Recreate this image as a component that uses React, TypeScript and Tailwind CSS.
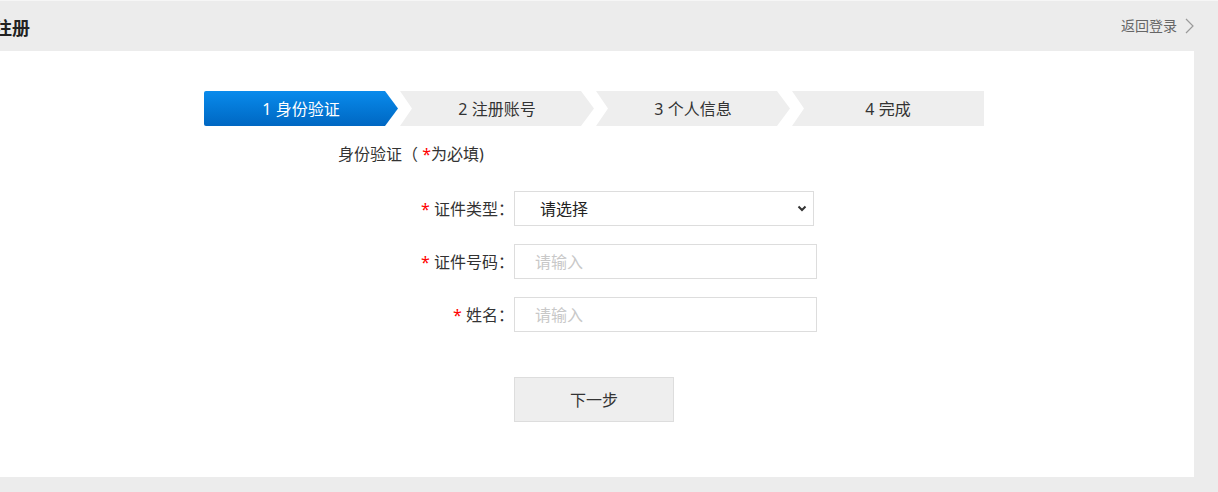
import React from 'react';

const steps = [
  { label: '1 身份验证', shape: 'first' },
  { label: '2 注册账号', shape: 'mid' },
  { label: '3 个人信息', shape: 'mid' },
  { label: '4 完成', shape: 'last' },
];

const App: React.FC = () => {
  return (
    <div className="w-full h-[492px] bg-[#ececec] border-t border-[#f6f6f6] overflow-hidden font-['Noto_Sans','Noto_Sans_CJK_SC',sans-serif] text-[#333]">
      {/* Header */}
      <div className="w-[1194px] h-[50px] flex items-center justify-between">
        <h1 className="ml-[-6px] pt-[3px] text-[18px] font-bold leading-[24px] text-[#222]">注册</h1>
        <a href="#" className="flex items-center gap-[8px] text-[14px] leading-[20px] text-[#666]">
          返回登录
          <svg width="9" height="16" viewBox="0 0 9 16" fill="none">
            <path d="M1 1l7 7-7 7" stroke="#9a9a9a" strokeWidth="1.2" />
          </svg>
        </a>
      </div>

      {/* Panel */}
      <div className="w-[1194px] h-[426px] bg-white">
        <div className="ml-[204px] pt-[40px]">
          {/* Steps */}
          <div className="flex gap-[2px]">
            {steps.map((s) => (
              <div
                key={s.label}
                className={
                  s.shape === 'first'
                    ? 'w-[194px] h-[35px] flex items-center justify-center text-[16px] text-white rounded-l-[2px] bg-gradient-to-b from-[#0a8bec] to-[#0067c2] [clip-path:polygon(0_0,calc(100%_-_13px)_0,100%_50%,calc(100%_-_13px)_100%,0_100%)]'
                    : s.shape === 'mid'
                    ? 'w-[194px] h-[35px] flex items-center justify-center text-[16px] bg-[#eeeeee] [clip-path:polygon(0_0,calc(100%_-_13px)_0,100%_50%,calc(100%_-_13px)_100%,0_100%,12px_50%)]'
                    : 'w-[192px] h-[35px] flex items-center justify-center text-[16px] bg-[#eeeeee] [clip-path:polygon(0_0,100%_0,100%_100%,0_100%,12px_50%)]'
                }
              >
                {s.label}
              </div>
            ))}
          </div>

          {/* Subtitle */}
          <p className="mt-[18px] pl-[134px] text-[16px] leading-[20px]">
            身份验证（ <span className="text-[#f00]">*</span>为必填)
          </p>

          {/* Form */}
          <div className="mt-[27px] flex flex-col gap-[18px]">
            <div className="flex items-center">
              <label className="w-[310px] text-right text-[16px] leading-[20px]">
                <span className="text-[#f00]">*</span> 证件类型：
              </label>
              <div className="relative">
                <select className="appearance-none w-[300px] h-[35px] border border-[#dddddd] bg-white pl-[25px] text-[16px] text-[#222] outline-none">
                  <option>请选择</option>
                </select>
                <svg
                  className="absolute right-[7px] top-[14px] pointer-events-none"
                  width="10"
                  height="7"
                  viewBox="0 0 10 7"
                  fill="none"
                >
                  <path d="M1.5 1.5l3.5 3.5 3.5-3.5" stroke="#333" strokeWidth="2" />
                </svg>
              </div>
            </div>
            <div className="flex items-center">
              <label className="w-[310px] text-right text-[16px] leading-[20px]">
                <span className="text-[#f00]">*</span> 证件号码：
              </label>
              <input
                placeholder="请输入"
                className="w-[303px] h-[35px] border border-[#dddddd] pl-[20px] text-[16px] outline-none placeholder:text-[#c8c8c8]"
              />
            </div>
            <div className="flex items-center">
              <label className="w-[310px] text-right text-[16px] leading-[20px]">
                <span className="text-[#f00]">*</span> 姓名：
              </label>
              <input
                placeholder="请输入"
                className="w-[303px] h-[35px] border border-[#dddddd] pl-[20px] text-[16px] outline-none placeholder:text-[#c8c8c8]"
              />
            </div>
          </div>

          {/* Next */}
          <div className="mt-[45px] pl-[310px]">
            <button className="w-[160px] h-[45px] bg-[#eeeeee] border border-[#dddddd] text-[16px] text-[#333]">
              下一步
            </button>
          </div>
        </div>
      </div>
    </div>
  );
};

export default App;
